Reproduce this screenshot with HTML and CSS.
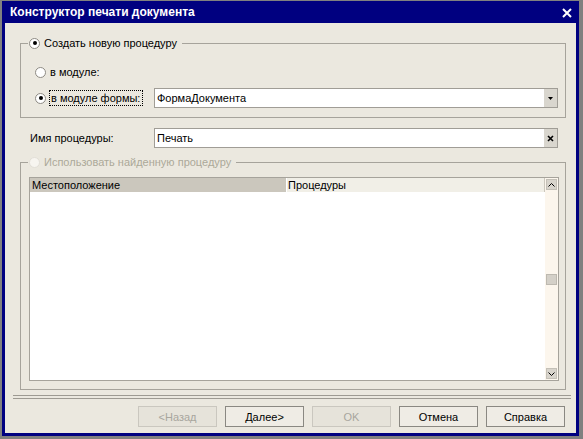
FILE: index.html
```html
<!DOCTYPE html>
<html>
<head>
<meta charset="utf-8">
<link rel="stylesheet" href="styles.css">
</head>
<body>
<div class="window">
  <div class="titlebar">
    <span class="title">Конструктор печати документа</span>
    <svg class="close" width="10" height="10" viewBox="0 0 10 10"><path d="M1 1 L9 9 M9 1 L1 9" stroke="#fff" stroke-width="2" fill="none"/></svg>
  </div>
  <div class="content">
    <div class="group g1">
      <div class="gtitle"><span class="radio checked"></span><span>Создать новую процедуру</span></div>
      <div class="row r1"><span class="radio"></span><span class="lbl">в модуле:</span></div>
      <div class="row r2">
        <span class="radio checked"></span><span class="lbl focus">в модуле формы:</span>
        <div class="input">
          <span class="val">ФормаДокумента</span>
          <span class="ibtn"><svg width="5" height="3" viewBox="0 0 5 3"><path d="M0 0 H5 L2.5 3 Z" fill="#000"/></svg></span>
        </div>
      </div>
    </div>
    <div class="row name">
      <span class="nlabel">Имя процедуры:</span>
      <div class="input">
        <span class="val">Печать</span>
        <span class="ibtn"><svg width="7" height="7" viewBox="0 0 7 7"><path d="M1 1 L6 6 M6 1 L1 6" stroke="#000" stroke-width="1.6" fill="none"/></svg></span>
      </div>
    </div>
    <div class="group g2">
      <div class="gtitle disabled"><span class="radio dis"></span><span>Использовать найденную процедуру</span></div>
      <div class="table">
        <div class="tmain">
          <div class="thead">
            <div class="th c1">Местоположение</div>
            <div class="th c2">Процедуры</div>
          </div>
          <div class="tbody"></div>
        </div>
        <div class="vscroll">
          <div class="sbtn"><svg width="7" height="4" viewBox="0 0 7 4"><path d="M0.5 3.5 L3.5 0.5 L6.5 3.5" stroke="#000" stroke-width="1" fill="none"/></svg></div>
          <div class="thumb"></div>
          <div class="spacer"></div>
          <div class="sbtn"><svg width="7" height="4" viewBox="0 0 7 4"><path d="M0.5 0.5 L3.5 3.5 L6.5 0.5" stroke="#000" stroke-width="1" fill="none"/></svg></div>
        </div>
      </div>
    </div>
    <div class="sep"></div>
    <div class="buttons">
      <div class="btn disabled">&lt;Назад</div>
      <div class="btn">Далее&gt;</div>
      <div class="btn disabled">OK</div>
      <div class="btn">Отмена</div>
      <div class="btn">Справка</div>
    </div>
  </div>
</div>
</body>
</html>
```

FILE: styles.css
```css
html, body {
  margin: 0;
  padding: 0;
}
body {
  width: 583px;
  height: 439px;
  overflow: hidden;
  background: #808080;
  font-family: "Liberation Sans", Arial, sans-serif;
  font-size: 11px;
  color: #000;
}
.window {
  margin: 1px 4px 0 2px;
  width: 571px;
  border: 3px solid #000080;
  border-top: 0;
  background: #ebe8df;
}
.titlebar {
  height: 22px;
  background: #000080;
  display: flex;
  align-items: center;
  justify-content: space-between;
  padding: 0 4px 0 5px;
  color: #fff;
  font-weight: bold;
  font-size: 12px;
}
.close {
  margin-top: 2px;
}
.content {
  height: 410px;
  display: flex;
  flex-direction: column;
  box-sizing: border-box;
  overflow: hidden;
}
.group {
  border: 1px solid #a6a39b;
  display: flex;
  flex-direction: column;
}
.g1 {
  margin: 20px 10px 0 15px;
  padding: 0 7px 9px 14px;
}
.gtitle {
  margin-top: -8px;
  margin-left: -7px;
  height: 14px;
  align-self: flex-start;
  display: flex;
  align-items: center;
  gap: 4px;
  background: #ebe8df;
  padding: 0 5px 0 1px;
}
.gtitle.disabled {
  color: #aca899;
}
.radio {
  width: 11px;
  height: 11px;
  box-sizing: border-box;
  border-radius: 50%;
  border: 1px solid #8e8b84;
  background: #fff;
  display: flex;
  align-items: center;
  justify-content: center;
  flex: none;
}
.radio.checked::after {
  content: "";
  width: 4px;
  height: 4px;
  border-radius: 50%;
  background: #000;
}
.radio.dis {
  border-color: #e2dfd7;
  background: #f7f5f0;
}
.row {
  display: flex;
  align-items: center;
  height: 20px;
}
.r1 {
  margin-top: 12px;
  gap: 4px;
}
.r2 {
  margin-top: 6px;
  gap: 3px;
}
.lbl.focus {
  border: 1px dotted #000;
  padding: 1px 2px 1px 1px;
  line-height: 12px;
}
.input {
  margin-left: auto;
  width: 404px;
  height: 20px;
  box-sizing: border-box;
  border: 1px solid #a09d96;
  background: #fff;
  display: flex;
}
.val {
  flex: 1;
  padding-left: 2px;
  line-height: 18px;
}
.ibtn {
  width: 13px;
  background: #d9d6ce;
  display: flex;
  align-items: center;
  justify-content: center;
}
.name {
  margin: 10px 18px 0 25px;
}
.g2 {
  margin: 14px 10px 0 15px;
  padding: 0 6px 8px 8px;
}
.g2 .gtitle {
  margin-left: -1px;
}
.table {
  margin-top: 8px;
  height: 204px;
  box-sizing: border-box;
  border: 1px solid #a6a39b;
  background: #fff;
  display: flex;
}
.tmain {
  flex: 1;
  display: flex;
  flex-direction: column;
}
.thead {
  display: flex;
  height: 14px;
}
.th {
  line-height: 14px;
  white-space: nowrap;
}
.th.c1 {
  width: 256px;
  box-sizing: border-box;
  padding-left: 2px;
  background: #cbc7bd;
}
.th.c2 {
  flex: 1;
  padding-left: 1px;
  background: #f1efe7;
  border-left: 1px solid #fff;
  border-right: 1px solid #cbc7bd;
}
.tbody {
  flex: 1;
}
.vscroll {
  width: 13px;
  box-sizing: border-box;
  padding: 1px;
  background: #fcf6ed;
  display: flex;
  flex-direction: column;
}
.sbtn {
  height: 11px;
  box-sizing: border-box;
  background: #d8d4cc;
  border: 1px solid #c4c0b7;
  display: flex;
  align-items: center;
  justify-content: center;
}
.thumb {
  height: 11px;
  margin-top: 84px;
  box-sizing: border-box;
  background: #d4d0c8;
  border: 1px solid #bdb9b0;
}
.spacer {
  flex: 1;
}
.sep {
  margin: 5px 5px 0 8px;
  height: 4px;
  box-sizing: border-box;
  border-top: 1px solid #9d9a92;
  border-bottom: 1px solid #9d9a92;
}
.buttons {
  margin: 7px 11px 0 0;
  display: flex;
  justify-content: flex-end;
  gap: 8px;
}
.btn {
  width: 79px;
  height: 21px;
  box-sizing: border-box;
  border: 1px solid #8a8882;
  background: #efece5;
  display: flex;
  align-items: center;
  justify-content: center;
}
.btn.disabled {
  border-color: #cac7bf;
  background: #e6e3da;
  color: #a8a69e;
}
```
